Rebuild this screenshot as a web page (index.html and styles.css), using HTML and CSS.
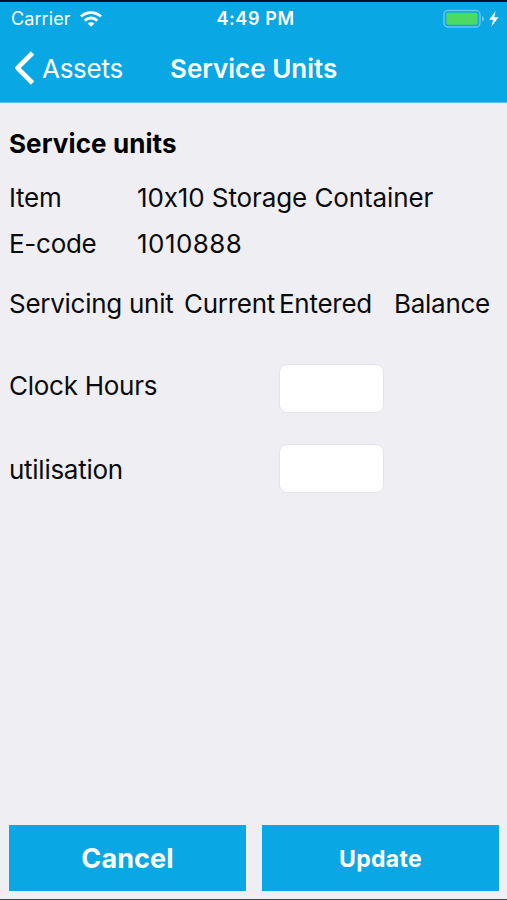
FILE: index.html
```html
<!DOCTYPE html>
<html lang="en">
<head>
<meta charset="utf-8">
<title>Service Units</title>
<link rel="stylesheet" href="styles.css">
</head>
<body>
<div class="screen">
  <header class="top">
    <div class="status">
      <div class="carrier">
        <span class="carrier-name">Carrier</span>
        <svg class="wifi" viewBox="0 0 22 16" width="22" height="16" fill="none" stroke="#fff" stroke-width="2.9">
          <path d="M1 5.500C6.500.3 15.500.3 21 5.500"/>
          <path d="M4.700 9.600C8.400 6.200 13.600 6.200 17.300 9.600"/>
          <path d="M11 15.800L7.500 12.500C9.500 10.700 12.500 10.700 14.500 12.500Z" fill="#fff" stroke="none"/>
        </svg>
      </div>
      <span class="time">4:49 PM</span>
      <svg class="battery" viewBox="0 0 57 20" width="57" height="20">
        <rect x="1" y="1.500" width="36" height="16.500" rx="4" fill="none" stroke="#63c6f2" stroke-width="1.500"/>
        <rect x="3.300" y="3.800" width="31.400" height="11.900" rx="1.800" fill="#4cd964"/>
        <path d="M39 7Q41.200 7.500 41.200 9.700Q41.200 12 39 12.500Z" fill="#63c6f2"/>
        <path d="M52.600 2L46.200 10.700H50.200L48.300 17.700L55.600 8.300H51.300Z" fill="#fff"/>
      </svg>
    </div>
    <nav class="nav">
      <a class="back"><svg viewBox="0 0 22 34" width="22" height="34" fill="none" stroke="#fff" stroke-width="4.600" stroke-linejoin="round"><path d="M19.600 2L4.500 17L19.600 32"/></svg><span class="back-label">Assets</span></a>
      <h1 class="title">Service Units</h1>
    </nav>
  </header>
  <main class="content">
    <h2 class="heading">Service units</h2>
    <dl class="details">
      <dt>Item</dt><dd class="name">10x10 Storage Container</dd>
      <dt>E-code</dt><dd class="code">1010888</dd>
    </dl>
    <div class="grid head">
      <span>Servicing unit</span><span>Current</span><span>Entered</span><span>Balance</span>
    </div>
    <div class="grid row first"><label for="hours">Clock Hours</label><input id="hours" type="text"></div>
    <div class="grid row second"><label for="use">utilisation</label><input id="use" type="text"></div>
  </main>
  <footer class="actions">
    <button class="btn cancel">Cancel</button>
    <button class="btn update">Update</button>
  </footer>
</div>
</body>
</html>
```
FILE: styles.css
```css
* { box-sizing: border-box; }
body { margin: 0; font-family: Inter, "Liberation Sans", sans-serif; background: #efeef3; }
.screen {
  height: 900px;
  display: flex;
  flex-direction: column;
  color: #0b0b0d;
  font-size: 26px;
  letter-spacing: -0.27px;
  white-space: nowrap;
  border-bottom: 1px solid #444347;
}
.top {
  height: 103px;
  background: #09a7e3;
  color: #fff;
  border-top: 2px solid #03111f;
  border-bottom: 1px solid #5cc3ec;
}
.status {
  height: 33px;
  padding: 0 7px 0 11px;
  display: grid;
  grid-template-columns: 1fr auto 1fr;
  align-items: center;
  font-size: 18px;
}
.carrier { display: flex; align-items: center; gap: 9px; letter-spacing: 0.1px; }
.time { font-weight: 600; letter-spacing: 0.6px; }
.battery { justify-self: end; }
.nav { height: 66px; display: flex; align-items: center; }
.back { width: 170px; padding-left: 13px; display: flex; align-items: center; gap: 7px; }
.title { margin: 0; font-size: 26px; font-weight: 600; letter-spacing: 0; }
.content { flex: 1; padding: 24px 9px 0; }
.heading { margin: 0 0 13px; font-size: 26px; line-height: 34px; font-weight: 700; letter-spacing: 0.1px; color: #000; }
.details { margin: 0; display: grid; grid-template-columns: 128px 1fr; grid-auto-rows: 46px; align-items: center; }
.details dd { margin: 0; }
.name { letter-spacing: -0.1px; }
.code { letter-spacing: 0.45px; }
.grid { display: grid; grid-template-columns: 175px 95px 115px 1fr; align-items: center; }
.head { height: 46px; margin-top: 14px; }
.row { height: 50px; }
.row label { grid-column: 1 / 3; }
.first { margin-top: 37px; }
.first label { padding-bottom: 6px; }
.second { margin-top: 30px; }
.second label { padding-top: 2px; }
.row input {
  width: 105px;
  height: 49px;
  border: 1px solid #e4e4e7;
  border-radius: 8px;
  background: #fff;
}
.actions { display: grid; grid-template-columns: 1fr 1fr; gap: 16px; padding: 0 8px 8px 9px; }
.btn {
  height: 66px;
  padding: 0;
  border: 0;
  background: #09a7e3;
  color: #fff;
  font-family: inherit;
  font-weight: 700;
  font-size: 27px;
  letter-spacing: 0.1px;
}
.update { padding-top: 1px; font-size: 23px; letter-spacing: 0.3px; }
```
